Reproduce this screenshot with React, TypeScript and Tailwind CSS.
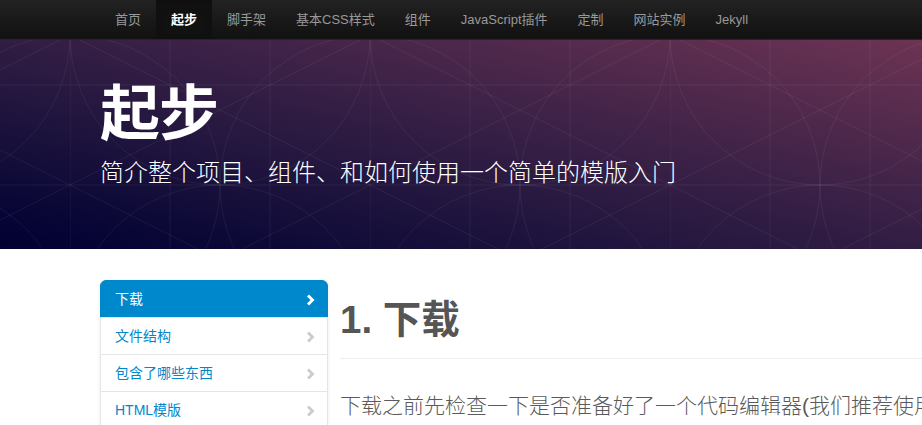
const navItems = ["首页", "起步", "脚手架", "基本CSS样式", "组件", "JavaScript插件", "定制", "网站实例", "Jekyll"];
const sideItems = ["下载", "文件结构", "包含了哪些东西", "HTML模版", "实例"];

// masthead background pattern (circles + grid lines)
function Pattern() {
  return (
    <svg className="absolute inset-0 w-full h-full" xmlns="http://www.w3.org/2000/svg">
      <defs>
        <pattern id="mast" width="300" height="300" patternUnits="userSpaceOnUse" x="70" y="-5">
          <g fill="none" stroke="#ffffff" strokeOpacity="0.05" strokeWidth="1">
            <line x1="0" y1="0" x2="0" y2="300" />
            <line x1="100" y1="0" x2="100" y2="300" />
            <line x1="200" y1="0" x2="200" y2="300" />
            <line x1="0" y1="50" x2="300" y2="50" />
            <line x1="0" y1="150" x2="300" y2="150" />
            <line x1="0" y1="250" x2="300" y2="250" />
            <line x1="0" y1="0" x2="300" y2="150" />
            <line x1="0" y1="150" x2="300" y2="0" />
            <line x1="0" y1="150" x2="300" y2="300" />
            <line x1="0" y1="300" x2="300" y2="150" />
            <circle cx="0" cy="150" r="150" />
            <circle cx="300" cy="150" r="150" />
            <circle cx="150" cy="0" r="150" />
            <circle cx="150" cy="300" r="150" />
            <circle cx="150" cy="150" r="220" />
          </g>
        </pattern>
      </defs>
      <rect width="100%" height="100%" fill="url(#mast)" />
    </svg>
  );
}

// thick glyphicon-style chevron
function Chevron({ active }: { active: boolean }) {
  return (
    <svg
      width="14"
      height="14"
      viewBox="0 0 14 14"
      className={active ? "-mr-[6px] mt-[2px] text-white" : "-mr-[6px] mt-[2px] text-[#cccccc]"}
    >
      <path d="M4 1.5 L9.5 7 L4 12.5 L2 10.5 L5.5 7 L2 3.5 Z" fill="currentColor" />
    </svg>
  );
}

export default function App() {
  return (
    <div
      className="w-[922px] h-[425px] overflow-hidden bg-white"
      style={{ fontFamily: '"Liberation Sans", "Noto Sans CJK SC", sans-serif' }}
    >
      {/* navbar ==================== */}
      <div className="h-10 bg-gradient-to-b from-[#222222] to-[#111111] border-b border-[#252525]">
        <ul className="flex pl-[100px] h-full">
          {navItems.map((item) => (
            <li
              key={item}
              className={
                item === "起步"
                  ? "px-[15px] flex items-center text-[13px] text-white font-bold bg-[#111111] shadow-[inset_0_3px_8px_rgba(0,0,0,0.125)]"
                  : "px-[15px] flex items-center text-[13px] text-[#999999]"
              }
            >
              {item}
            </li>
          ))}
        </ul>
      </div>

      {/* masthead ==================== */}
      <div className="relative h-[209px] bg-gradient-to-tr from-[#020031] to-[#6d3353] overflow-hidden">
        <Pattern />
        <div className="relative pl-[100px] pt-[45px]">
          <h1 className="text-[60px] leading-[60px] font-bold text-white tracking-[-1px]">起步</h1>
          <p className="mt-[13px] text-[24px] leading-[30px] font-light text-white">
            简介整个项目、组件、和如何使用一个简单的模版入门
          </p>
        </div>
      </div>

      {/* body ==================== */}
      <div className="flex pl-[100px] pt-[31px] gap-3">
        <ul className="w-[228px] shrink-0 bg-white rounded-t-md shadow-[0_1px_4px_rgba(0,0,0,0.065)]">
          {sideItems.map((item, idx) => (
            <li key={item} className="-mb-px">
              <div
                className={
                  idx === 0
                    ? "flex items-center justify-between h-[38px] px-[14px] text-[14px] text-white bg-[#0088cc] border border-[#0088cc] rounded-t-md"
                    : "flex items-center justify-between h-[38px] px-[14px] text-[14px] text-[#0088cc] bg-white border border-[#e5e5e5]"
                }
              >
                <span>{item}</span>
                <Chevron active={idx === 0} />
              </div>
            </li>
          ))}
        </ul>

        <div className="flex-1 min-w-0">
          <div className="mt-5 pb-[18px] border-b border-[#eeeeee]">
            <h1 className="text-[38.5px] leading-[40px] font-bold text-[#555555]">1. 下载</h1>
          </div>
          <p className="mt-8 text-[21px] leading-[30px] font-light text-[#5a5a5a] whitespace-nowrap">
            下载之前先检查一下是否准备好了一个代码编辑器(我们推荐使用Sublime Text 2)
          </p>
        </div>
      </div>
    </div>
  );
}
